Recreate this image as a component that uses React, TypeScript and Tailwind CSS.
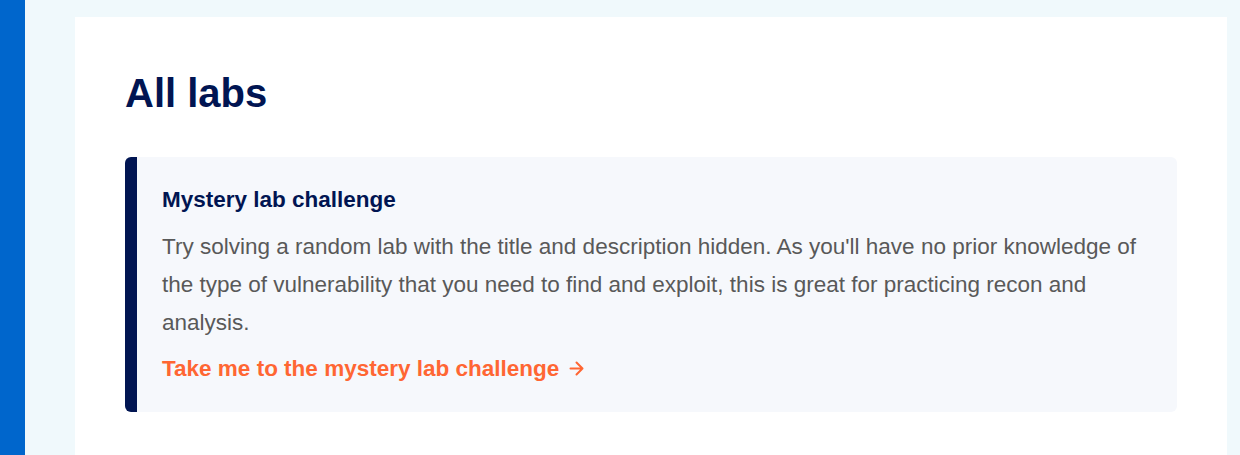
import React from "react";

export default function App() {
  return (
    <div
      className="flex h-[455px] w-[1240px] overflow-hidden bg-[#f0f9fc]"
      style={{ fontFamily: '"Liberation Sans", Arial, sans-serif' }}
    >
      <div className="w-[25px] shrink-0 bg-[#0066cc]" />
      <div className="flex-1 pl-[50px] pr-[13px] pt-[17px]">
        <div className="h-full bg-white pl-[50px] pr-[50px] pt-[53px]">
          <h1 className="text-[40px] font-bold leading-[46px] text-[#011552]">All labs</h1>
          <div className="mt-[41px] flex overflow-hidden rounded-[6px] bg-[#f6f8fc]">
            <div className="w-[12px] shrink-0 bg-[#011552]" />
            <div className="pl-[25px] pr-[24px] pt-[30px] pb-[30px]">
              <h3 className="text-[22.5px] font-bold leading-[26px] text-[#011552]">Mystery lab challenge</h3>
              <p className="mt-[15px] text-[22.5px] leading-[38px] text-[#595959]">
                Try solving a random lab with the title and description hidden. As you'll have no prior knowledge of
                the type of vulnerability that you need to find and exploit, this is great for practicing recon and
                analysis.
              </p>
              <a className="mt-[14px] flex items-center text-[22.5px] font-bold leading-[26px] text-[#ff6633]" href="#">
                Take me to the mystery lab challenge
                <svg className="ml-[10px] mt-[-2px]" width="15" height="15" viewBox="0 0 15 15" fill="none" stroke="#ff6633" strokeWidth="2" strokeLinecap="round" strokeLinejoin="round">
                  <path d="M1.5 7.5h12M7.5 1.5l6 6-6 6" />
                </svg>
              </a>
            </div>
          </div>
        </div>
      </div>
    </div>
  );
}
